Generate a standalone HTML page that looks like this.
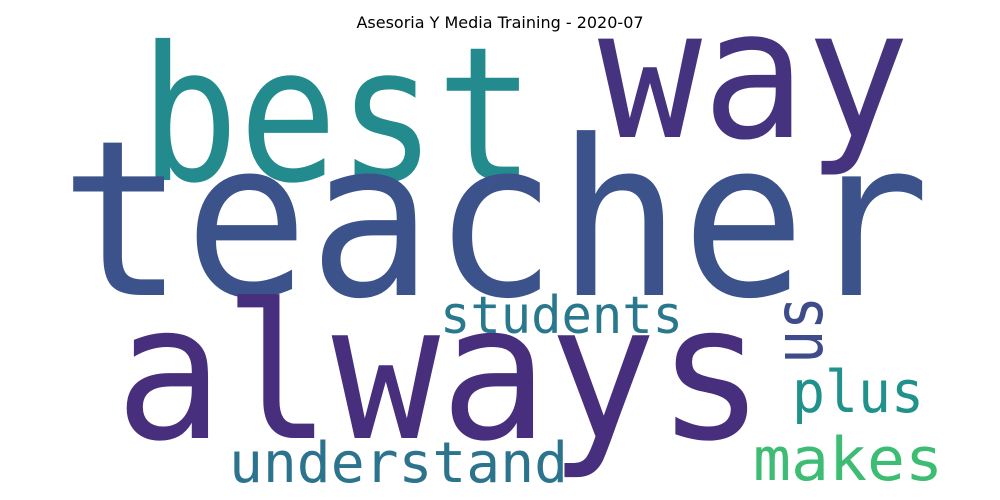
<!DOCTYPE html>
<html><head><meta charset="utf-8"><style>
html,body{margin:0;padding:0;background:#fff;width:1000px;height:500px;overflow:hidden}
svg{display:block}
text.w{font-family:"DejaVu Sans Mono","Liberation Mono",monospace}
</style></head><body>
<svg width="1000" height="500" viewBox="0 0 1000 500" xmlns="http://www.w3.org/2000/svg">
<text x="500" y="28" text-anchor="middle" font-family="DejaVu Sans, Liberation Sans, sans-serif" font-size="16" fill="#000">Asesoria Y Media Training - 2020-07</text>
<text class="w" x="140" y="180" font-size="187" fill="#238a8d" textLength="395" lengthAdjust="spacingAndGlyphs">best</text>
<text class="w" x="598" y="137" font-size="180" fill="#46337f" textLength="312" lengthAdjust="spacingAndGlyphs">way</text>
<text class="w" x="60" y="295" font-size="217" fill="#3b528b" textLength="870" lengthAdjust="spacingAndGlyphs">teacher</text>
<text class="w" x="115" y="438" font-size="188" fill="#472f7d" textLength="650" lengthAdjust="spacingAndGlyphs">always</text>
<text class="w" x="440" y="333" font-size="52" fill="#2a788e" textLength="243" lengthAdjust="spacingAndGlyphs">students</text>
<text class="w" transform="translate(822,364) rotate(-90)" font-size="68" fill="#3e4c8a" textLength="68" lengthAdjust="spacingAndGlyphs">us</text>
<text class="w" x="792" y="412" font-size="58" fill="#21918c" textLength="132" lengthAdjust="spacingAndGlyphs">plus</text>
<text class="w" x="229" y="482" font-size="56" fill="#2c738e" textLength="339" lengthAdjust="spacingAndGlyphs">understand</text>
<text class="w" x="753" y="480" font-size="60" fill="#3dbc74" textLength="190" lengthAdjust="spacingAndGlyphs">makes</text>
</svg>
</body></html>
